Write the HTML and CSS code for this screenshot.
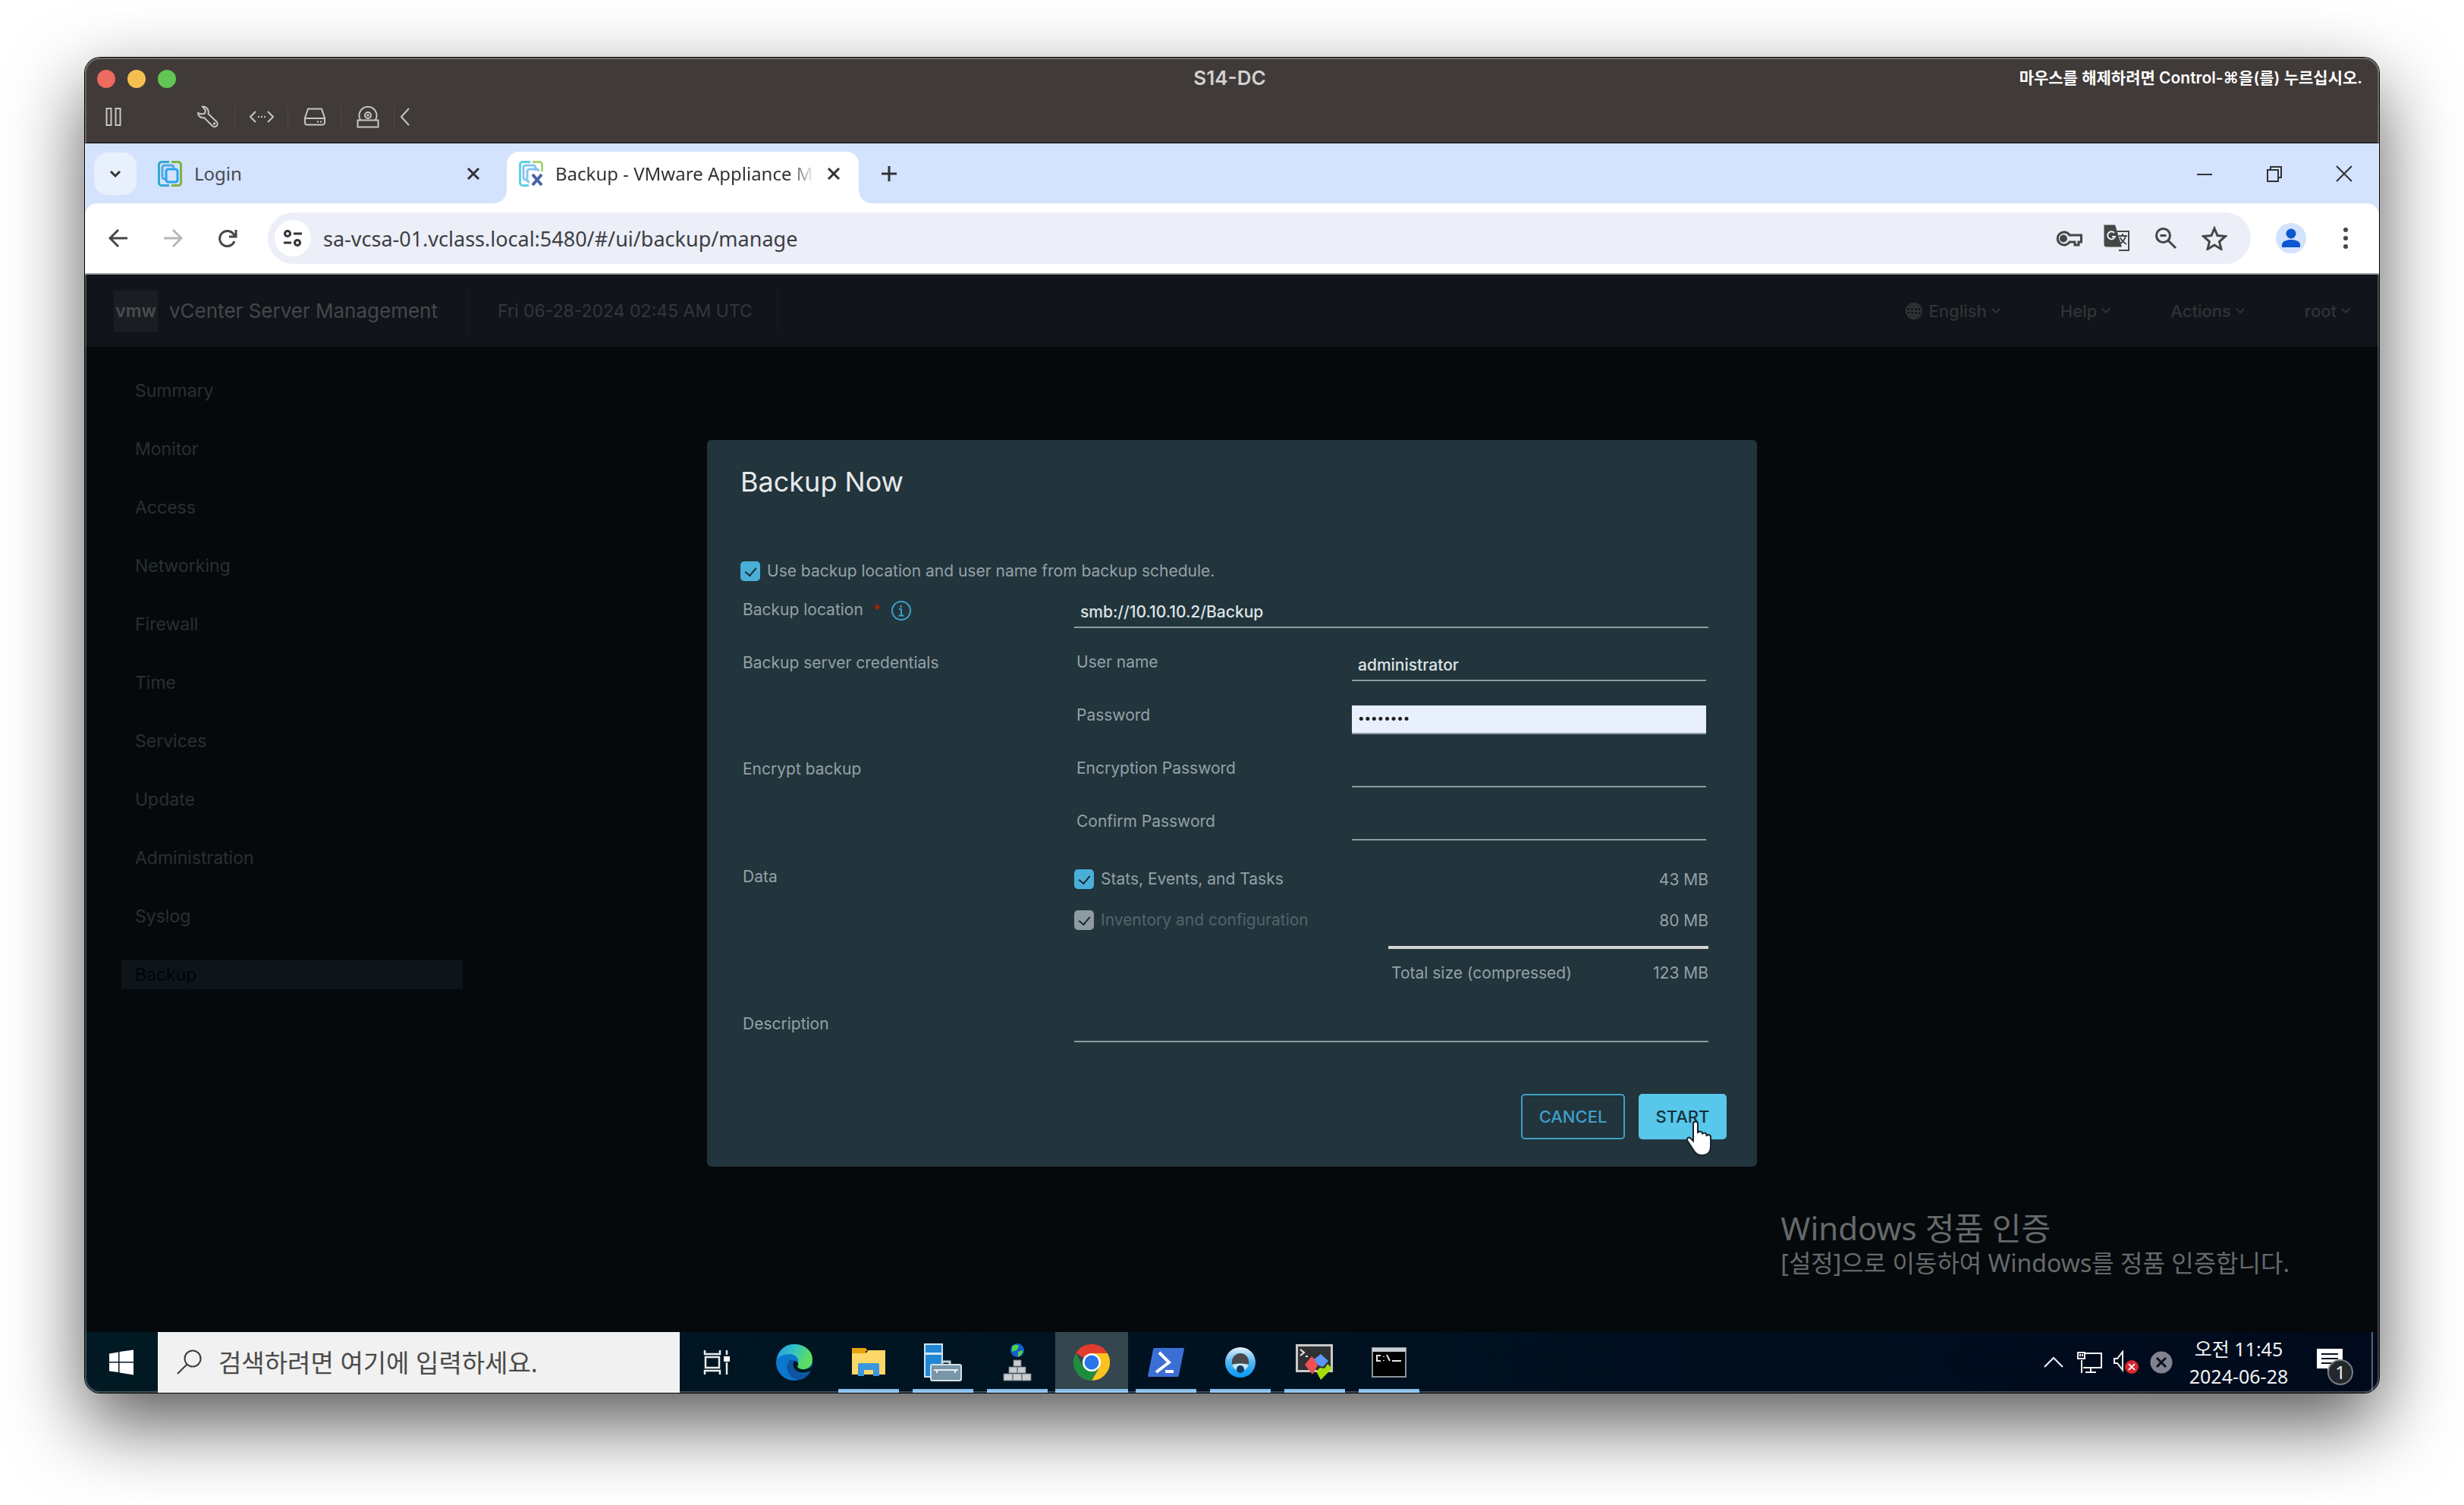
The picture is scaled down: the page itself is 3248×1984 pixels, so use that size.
FILE: index.html
```html
<!DOCTYPE html>
<html lang="ko">
<head>
<meta charset="utf-8">
<meta name="viewport" content="width=device-width, initial-scale=1">
<title>S14-DC</title>
<link rel="stylesheet" href="styles.css">
</head>
<body>
<div class="window">
  <header class="titlebar">
    <div class="title-row">
      <div class="lights">
        <button class="light light-red" aria-label="Close window"></button>
        <button class="light light-yellow" aria-label="Minimize window"></button>
        <button class="light light-green" aria-label="Zoom window"></button>
      </div>
      <h1 class="vm-name">S14-DC</h1>
      <p class="release-hint">마우스를 해제하려면 Control-⌘을(를) 누르십시오.</p>
    </div>
    <div class="vm-tools">
      <button class="vm-tool vm-pause" aria-label="Pause"><svg width="22" height="24" viewBox="0 0 22 24"><path d="M1.500 1h6v22h-6zM13.500 1h6v22h-6z"/></svg></button>
      <button class="vm-tool" aria-label="Settings"><svg width="30" height="30" viewBox="0 0 30 30"><path d="M2 10c0 4 4 7 8 6l11 11c1.500 1.500 4 1.500 5.500 0s1.500-4 0-5.500L15.500 11C17 6 13 1 8 1.500l4 5-1 4-4 1z"/><circle cx="23.500" cy="24" r="0.800"/></svg></button>
      <button class="vm-tool" aria-label="Network"><svg width="32" height="16" viewBox="0 0 32 16"><path d="M8 1 1 8l7 7M24 1l7 7-7 7M11 8h2M15 8h2M19 8h2"/></svg></button>
      <button class="vm-tool" aria-label="Hard disk"><svg width="30" height="24" viewBox="0 0 30 24"><path d="M6 1.500h18l4 12v6a3 3 0 0 1-3 3H5a3 3 0 0 1-3-3v-6zM2 14h26M18 18.500h2M22 18.500h2"/></svg></button>
      <button class="vm-tool" aria-label="CD drive"><svg width="30" height="30" viewBox="0 0 30 30"><path d="M1.500 19.500h27v9h-27zM5 19a11.500 11.500 0 1 1 20 0"/><circle cx="15" cy="13" r="4"/><circle cx="15" cy="13" r="0.800"/></svg></button>
      <button class="vm-tool vm-collapse" aria-label="Collapse"><svg width="14" height="24" viewBox="0 0 14 24"><path d="M12 1 2 12l10 11"/></svg></button>
    </div>
  </header>

  <div class="tab-strip">
    <button class="tab-search" aria-label="Search tabs"><svg width="18" height="12" viewBox="0 0 18 12"><path d="m3 3 6 6 6-6"/></svg></button>
    <div class="tab">
      <svg class="favicon" viewBox="0 0 32 34"><g fill="none" stroke-width="3"><path stroke="#35a9cf" d="M15 1.500H5A3.500 3.500 0 0 0 1.500 5v24A3.500 3.500 0 0 0 5 32.500h10"/><path stroke="#7cb342" d="M18 1.500h9A3.500 3.500 0 0 1 30.500 5v24a3.500 3.500 0 0 1-3.500 3.500h-9"/><rect x="6" y="6" width="15" height="18" rx="3" stroke="#4fa9e8"/><rect x="11" y="11" width="15" height="17" rx="3" stroke="#29a3f0" fill="#d3e2fd"/></g></svg>
      <span class="tab-title">Login</span>
      <button class="tab-close" aria-label="Close tab"><svg width="18" height="18" viewBox="0 0 18 18"><path d="m2 2 14 14M16 2 2 16"/></svg></button>
    </div>
    <div class="tab tab-active">
      <svg class="favicon" viewBox="0 0 32 34"><g fill="none" stroke-width="3"><path stroke="#5fcfe4" d="M15 1.500H5A3.500 3.500 0 0 0 1.500 5v24A3.500 3.500 0 0 0 5 32.500h8"/><path stroke="#a9d86e" d="M18 1.500h9A3.500 3.500 0 0 1 30.500 5v9"/><path stroke="#86c4f0" d="M12 25H9a3 3 0 0 1-3-3V9a3 3 0 0 1 3-3h10a3 3 0 0 1 3 3v4M14 28a3 3 0 0 1-3-3V14a3 3 0 0 1 3-3h9a3 3 0 0 1 3 3"/><path stroke="#4a63a6" stroke-width="4" d="m18 18 12 14M30 18 18 32"/></g></svg>
      <span class="tab-title">Backup - VMware Appliance M</span>
      <button class="tab-close" aria-label="Close tab"><svg width="18" height="18" viewBox="0 0 18 18"><path d="m2 2 14 14M16 2 2 16"/></svg></button>
    </div>
    <button class="new-tab" aria-label="New tab"><svg width="22" height="22" viewBox="0 0 22 22"><path d="M11 1v20M1 11h20"/></svg></button>
    <div class="win-controls">
      <button aria-label="Minimize"><svg width="22" height="22" viewBox="0 0 22 22"><path d="M1 12h20"/></svg></button>
      <button aria-label="Restore"><svg width="22" height="22" viewBox="0 0 22 22"><path d="M2 6h14v15H2zM6 6V2h14v14h-4"/></svg></button>
      <button aria-label="Close"><svg width="22" height="22" viewBox="0 0 22 22"><path d="m1 1 20 20M21 1 1 21"/></svg></button>
    </div>
  </div>

  <div class="nav-wrap">
    <div class="nav-bar">
      <button class="nav-btn" aria-label="Back"><svg width="26" height="26" viewBox="0 0 26 26"><path d="M25 13H3M13 2 2 13l11 11"/></svg></button>
      <button class="nav-btn nav-off" aria-label="Forward"><svg width="26" height="26" viewBox="0 0 26 26"><path d="M1 13h22M13 2l11 11-11 11"/></svg></button>
      <button class="nav-btn" aria-label="Reload"><svg width="26" height="26" viewBox="0 0 26 26"><path d="M22 17a10 10 0 1 1-1-9l3 3M24 2v9h-9"/></svg></button>
      <div class="url-pill">
        <button class="site-info" aria-label="Site information"><svg width="26" height="24" viewBox="0 0 26 24"><circle cx="6" cy="6" r="3.500"/><path d="M14 6h11M1 18h10"/><circle cx="19" cy="18" r="3.500"/></svg></button>
        <input class="url" type="text" aria-label="Address" value="sa-vcsa-01.vclass.local:5480/#/ui/backup/manage">
        <button class="pill-btn" aria-label="Passwords"><svg width="36" height="22" viewBox="0 0 36 22"><path d="M19 7h15.500v9H31v4h-5v-4h-7a8.500 8.500 0 1 1 0-9z"/><circle cx="11" cy="11.500" r="3.500" fill="#444746"/></svg></button>
        <button class="pill-btn" aria-label="Translate"><svg width="36" height="36" viewBox="0 0 36 36"><path d="M18 9h15v25H20" stroke-width="2"/><path d="M2 2h12l8 26H4a2 2 0 0 1-2-2z" fill="#444746"/><path stroke="#eceef8" stroke-width="2" d="M14 11a5 5 0 1 0 1 5h-4"/><path stroke-width="2" d="M20 15h11M25 12v3M29 15c-1 5-4 8-7 10M22 17c1 3 5 7 8 9"/></svg></button>
        <button class="pill-btn" aria-label="Zoom"><svg width="30" height="30" viewBox="0 0 30 30"><circle cx="11.500" cy="11.500" r="9"/><path d="m18 18 10 10M7.500 11.500h8"/></svg></button>
        <button class="pill-btn" aria-label="Bookmark"><svg width="34" height="32" viewBox="0 0 34 32"><path d="m17 3 4 9.500 10.500 1-8 7 2.500 10L17 25l-9 5.500 2.500-10-8-7 10.500-1z"/></svg></button>
      </div>
      <button class="avatar" aria-label="Profile"><svg width="40" height="40" viewBox="0 0 40 40"><circle cx="20" cy="14" r="6.500"/><path d="M8 32v-3c0-5 6-7 12-7s12 2 12 7v3z"/></svg></button>
      <button class="menu-dots" aria-label="Menu"><svg width="8" height="30" viewBox="0 0 8 30"><circle cx="4" cy="4" r="3"/><circle cx="4" cy="15" r="3"/><circle cx="4" cy="26" r="3"/></svg></button>
    </div>
  </div>

  <div class="page">
    <header class="app-header">
      <span class="vmw">vmw</span>
      <span class="app-name">vCenter Server Management</span>
      <span class="app-date">Fri 06-28-2024 02:45 AM UTC</span>
      <nav class="app-menus">
        <button><svg width="24" height="24" viewBox="0 0 24 24"><circle cx="12" cy="12" r="10"/><path d="M2 12h20M12 2v20M4 7h16M4 17h16M12 2C5 7 5 17 12 22M12 2c7 5 7 15 0 20"/></svg>English<svg class="caret" width="12" height="8" viewBox="0 0 12 8"><path d="m1 1 5 5 5-5"/></svg></button>
        <button>Help<svg class="caret" width="12" height="8" viewBox="0 0 12 8"><path d="m1 1 5 5 5-5"/></svg></button>
        <button>Actions<svg class="caret" width="12" height="8" viewBox="0 0 12 8"><path d="m1 1 5 5 5-5"/></svg></button>
        <button>root<svg class="caret" width="12" height="8" viewBox="0 0 12 8"><path d="m1 1 5 5 5-5"/></svg></button>
      </nav>
    </header>
    <nav class="side">
      <a href="#summary">Summary</a>
      <a href="#monitor">Monitor</a>
      <a href="#access">Access</a>
      <a href="#networking">Networking</a>
      <a href="#firewall">Firewall</a>
      <a href="#time">Time</a>
      <a href="#services">Services</a>
      <a href="#update">Update</a>
      <a href="#administration">Administration</a>
      <a href="#syslog">Syslog</a>
      <a class="current" href="#backup">Backup</a>
    </nav>

    <div class="overlay">
      <form class="dialog" aria-labelledby="dialog-title">
        <h2 class="dialog-title" id="dialog-title">Backup Now</h2>
        <div class="dialog-body">
          <label class="check schedule"><input type="checkbox" checked> Use backup location and user name from backup schedule.</label>
          <div class="row">
            <label class="name" for="location">Backup location <span class="req">•</span>
              <svg class="info" width="28" height="28" viewBox="0 0 28 28"><circle cx="14" cy="14" r="12"/><path d="M11 12h3v8M10.500 20.500h7M13.500 7v3"/></svg>
            </label>
            <div class="field"><input class="line-input" id="location" type="text" value="smb://10.10.10.2/Backup"></div>
          </div>
          <div class="row">
            <span class="name">Backup server credentials</span>
            <div class="pairs">
              <label for="user">User name</label><div class="field"><input class="line-input" id="user" type="text" value="administrator"></div>
              <label for="pass">Password</label><div class="field"><input class="line-input autofilled" id="pass" type="password" value="password"></div>
            </div>
          </div>
          <div class="row">
            <span class="name">Encrypt backup</span>
            <div class="pairs">
              <label for="enc">Encryption Password</label><div class="field"><input class="line-input" id="enc" type="password"></div>
              <label for="conf">Confirm Password</label><div class="field"><input class="line-input" id="conf" type="password"></div>
            </div>
          </div>
          <div class="row data-row">
            <span class="name">Data</span>
            <div class="data">
              <div class="data-item"><label class="check"><input type="checkbox" checked> Stats, Events, and Tasks</label><span>43 MB</span></div>
              <div class="data-item"><label class="check check-off"><input type="checkbox" checked disabled> Inventory and configuration</label><span>80 MB</span></div>
              <div class="total"><span>Total size (compressed)</span><span>123 MB</span></div>
            </div>
          </div>
          <div class="row">
            <label class="name" for="desc">Description</label>
            <div class="field"><input class="line-input" id="desc" type="text"></div>
          </div>
        </div>
        <div class="dialog-actions">
          <button class="btn btn-outline" type="button">CANCEL</button>
          <button class="btn btn-primary" type="button">START<svg class="pointer" width="36" height="48" viewBox="0 0 36 48"><path d="M10 27V4.500a3 3 0 0 1 6 0V17c0-3.500 6-3 6 .5v1c0-3 5.500-2.500 5.500 1v1.500c0-3 5.500-2.500 5.500 1V34c0 7-4 12-12 12-6 0-9-3-12-9l-6.500-10C.5 24 4 21 6.500 23.500z"/></svg></button>
        </div>
      </form>
    </div>

    <div class="watermark">
      <p class="wm-title">Windows 정품 인증</p>
      <p class="wm-text">[설정]으로 이동하여 Windows를 정품 인증합니다.</p>
    </div>
  </div>

  <footer class="taskbar">
    <button class="start" aria-label="Start"><svg width="34" height="34" viewBox="0 0 34 34"><path fill="#fff" d="M1 5.500 13 3.500v12.500H1zM14.500 3 33 .5V16H14.500zM1 17.500h12v12.500L1 28.500zM14.500 17.500H33V33.500l-18.500-3z"/></svg></button>
    <label class="search"><svg width="36" height="34" viewBox="0 0 36 34"><circle cx="22" cy="12" r="10.500"/><path d="M14.500 19.500 2 32"/></svg><input type="text" aria-label="Search" placeholder="검색하려면 여기에 입력하세요."></label>
    <div class="apps">
      <button class="app task-view" aria-label="Task view"><svg width="36" height="34" viewBox="0 0 36 34"><g fill="none" stroke="#e8eef0" stroke-width="2.500"><path d="M2 1v5h20V1M2 33v-5h20v5M3 10h18v14H3zM31 1v6M31 17v16"/></g><path fill="#fff" d="M27 9h8v7h-8z"/></svg></button>
      <button class="app" aria-label="Edge"><svg width="48" height="48" viewBox="0 0 48 48"><defs><linearGradient id="e1" x1="0" x2="1" y2=".3"><stop offset="0" stop-color="#1f9be0"/><stop offset=".5" stop-color="#35c1c8"/><stop offset="1" stop-color="#5fe05a"/></linearGradient></defs><circle cx="24" cy="24" r="24" fill="#0c77cf"/><path fill="url(#e1)" d="M1 20C3 8 12 0 24 0c14 0 24 9 24 20 0 8-6 13-13 13-5 0-8-2-7-4 4-6 0-16-10-16C10 13 4 16 1 20z"/><path fill="#0d559f" d="M17 22c-7 10 1 25 14 25 6-1 11-5 14-10-8 4-18 2-21-5-1-3-1-6 1-9-3-3-6-3-8-1z"/><path fill="#011923" d="M24 22c-3 4-1 11 4 14 6 3 13 2 17-1l3-3v-5c-3 5-9 7-14 6-4-1-6-3-5-5 1-3-2-6-5-6z"/><path fill="#5fdc60" d="M46 15c3 9 0 18-11 18-5 0-8-2-7-4 1-2 2-4 1-7z" opacity=".5"/></svg></button>
      <button class="app open" aria-label="File Explorer"><svg width="44" height="38" viewBox="0 0 44 38"><path fill="#e8a20c" d="M0 0h18l3 4h-3v5H0z"/><path fill="#fdd768" d="M0 7h18l4-4h22v32H0z"/><path fill="#3a96dd" d="M8 37V22a2 2 0 0 1 2-2h24a2 2 0 0 1 2 2v15h-8v-8H16v8z"/></svg></button>
      <button class="app open" aria-label="Server Manager"><svg width="50" height="50" viewBox="0 0 50 50"><path fill="#1f87d6" stroke="#cfe4f2" stroke-width="2" d="M1 1h23v12H1zM1 14h23v30H1z"/><path fill="none" stroke="#c5d3db" stroke-width="3" d="M24 28v-4h10v4"/><rect x="9" y="28" width="40" height="21" rx="2" fill="#7896a8" stroke="#d5e0e6" stroke-width="2"/><path stroke="#e8eff3" stroke-width="2" d="M13 35h32M17 35v4M41 35v4"/></svg></button>
      <button class="app open" aria-label="IP tool"><svg width="38" height="50" viewBox="0 0 38 50"><circle cx="19" cy="9" r="9" fill="#1560c8"/><path fill="#4bd24b" d="M12 4c4-3 8-3 9 0l-3 5-6 2zM20 11l6-2c1 4-3 8-6 9z"/><g fill="#c9cdd0" stroke="#6f777c"><path d="M14 22h10v8H14zM8 31h11v8H8zM19 31h11v8H19zM1 40h12v9H1zM13 40h12v9H13zM25 40h12v9H25z"/></g></svg></button>
      <button class="app open app-active" aria-label="Chrome"><svg width="48" height="48" viewBox="0 0 48 48"><path fill="#e33b2e" d="M3.200 12A24 24 0 0 1 44.800 12L24 12v12z"/><path fill="#fcc31e" d="M44.800 12A24 24 0 0 1 24 48L34.400 30 24 12z"/><path fill="#1e8e3e" d="M24 48A24 24 0 0 1 3.200 12L13.600 30l10.400 6 10.400-6z"/><circle cx="24" cy="24" r="12" fill="#fff"/><circle cx="24" cy="24" r="9.500" fill="#2a74ea"/></svg></button>
      <button class="app open" aria-label="PowerShell"><svg width="48" height="38" viewBox="0 0 48 38"><path fill="#3c6fd6" d="M9 0h38a1 1 0 0 1 1 1l-7 35a2 2 0 0 1-2 2H1a1 1 0 0 1-1-1L7 2a2 2 0 0 1 2-2z"/><path fill="none" stroke="#fff" stroke-width="4" d="m15 6 13 13-17 13M23 31h11"/></svg></button>
      <button class="app open" aria-label="Remote client"><svg width="40" height="40" viewBox="0 0 40 40"><defs><linearGradient id="r1" x2="0" y2="1"><stop offset="0" stop-color="#e8f3fb"/><stop offset=".5" stop-color="#4fb4f2"/><stop offset="1" stop-color="#0797f5"/></linearGradient></defs><circle cx="20" cy="20" r="20" fill="url(#r1)"/><path fill="#c4e4f8" d="M9 20h22c0 7-5 11-11 11S9 27 9 20z"/><path fill="#4a4a4c" d="M9 19a11 11 0 0 1 22 0v4c-7-2-15-2-22 0z"/><circle cx="20" cy="29" r="5" fill="#163d5c"/></svg></button>
      <button class="app open" aria-label="Terminal manager"><svg width="50" height="48" viewBox="0 0 50 48"><path fill="#2f3133" stroke="#c9c9c9" stroke-width="3" d="M1.500 1.500h46v34h-46z"/><path fill="none" stroke="#eee" stroke-width="2" d="m6 7 5 4-5 4M13 16h3"/><path fill="#f0504f" d="m12 27 9-11 6 6 2 6-7 12z"/><path fill="#5c97f5" d="m24 20 9-7 10 9-7 8-6-2z"/><path fill="#a4dc0c" d="m27 36 5-5 6 1 4-6 6 6-15 15z"/></svg></button>
      <button class="app open" aria-label="Command Prompt"><svg width="46" height="40" viewBox="0 0 46 40"><path stroke="#8d9499" stroke-width="2" d="M1 1h44v38H1z"/><path fill="#c9d0d6" d="M1 1h44v5H1z"/><path fill="none" stroke="#e8e8e8" stroke-width="2" d="M12 11H7v7h5M16 12v1M16 17v1M20 10l4 8M27 18h12"/></svg></button>
    </div>
    <div class="tray">
      <button class="tray-more" aria-label="Show hidden icons"><svg width="26" height="16" viewBox="0 0 26 16"><path d="m1 14 12-12 12 12"/></svg></button>
      <button aria-label="Network"><svg width="34" height="30" viewBox="0 0 34 30"><path d="M11 3h21v19H8M6 12v17M1 2h9v8H1zM4 4v3M7 4v3M18 22v6M11 28h14"/></svg></button>
      <button aria-label="Volume muted"><svg width="34" height="32" viewBox="0 0 34 32"><path d="M1 11h4l7-9v24l-7-9H1z"/><circle cx="24" cy="22" r="9" fill="#d9252c" stroke="none"/><path d="m20 18 8 8M28 18l-8 8"/></svg></button>
      <button aria-label="Status"><svg width="30" height="30" viewBox="0 0 30 30"><circle cx="15" cy="15" r="14.500" fill="#80838f" stroke="none"/><path stroke="#0a1020" stroke-width="3" d="m9 9 12 12M21 9 9 21"/></svg></button>
      <div class="clock"><time>오전 11:45</time><time>2024-06-28</time></div>
      <button class="notify" aria-label="Notifications"><svg width="34" height="36" viewBox="0 0 34 36"><path fill="#fff" stroke="none" d="M0 0h34v26H20l-6 8v-8H0z"/><path stroke="#0a1020" d="M6 7h22M6 13h22M6 19h14"/></svg><span class="badge">1</span></button>
      <span class="peek"></span>
    </div>
  </footer>
</div>
</body>
</html>
```

FILE: styles.css
```css
* { box-sizing: border-box; }

body {
  margin: 0;
  min-height: 100vh;
  padding: 76px 112px 148px;
  display: flex;
  background: #fff;
  font-family: "Noto Sans", "Noto Sans CJK KR", sans-serif;
}

button {
  margin: 0;
  padding: 0;
  border: 0;
  background: none;
  color: inherit;
  font: inherit;
  display: flex;
  align-items: center;
  justify-content: center;
}

input { font: inherit; margin: 0; }
p, h1, h2 { margin: 0; }
svg { display: block; flex: none; }

.window {
  position: relative;
  flex: 1;
  display: flex;
  flex-direction: column;
  border-radius: 20px;
  overflow: hidden;
  box-shadow: 0 0 0 1px #000, 0 40px 100px rgba(0, 0, 0, .66);
}

/* thin highlight drawn over the window edge */
.window::after {
  content: "";
  position: absolute;
  inset: 0;
  border: 2px solid rgba(255, 255, 255, .24);
  border-radius: 20px;
  pointer-events: none;
}

/* host title bar */
.titlebar {
  height: 113px;
  background: #403a39;
  border-bottom: 1px solid #000;
  font-family: Inter, "Noto Sans CJK KR", sans-serif;
}

.title-row {
  height: 56px;
  padding: 0 22px 0 16px;
  display: grid;
  grid-template-columns: 1fr auto 1fr;
  align-items: center;
}

.lights { display: flex; gap: 16px; }
.light { width: 24px; height: 24px; border-radius: 50%; }
.light-red { background: #ed6a5e; }
.light-yellow { background: #f5bf4f; }
.light-green { background: #61c554; }
.vm-name { line-height: 32px; padding-bottom: 2px; font-size: 26px; font-weight: 600; color: #d3d1d0; }
.release-hint { line-height: 32px; padding-bottom: 2px; text-align: right; font-size: 21px; font-weight: 600; color: #fff; }

.vm-tools { display: flex; align-items: center; height: 44px; padding-left: 27px; }
.vm-tool { width: 70px; height: 28px; border-left: 1px solid #4f4948; }
.vm-tool svg { fill: none; stroke: #c8c5c4; stroke-width: 2; }
.vm-pause { width: 22px; margin-right: 78px; border: 0; }
.vm-pause + .vm-tool { border: 0; }
.vm-collapse { width: 28px; }

/* browser tabs */
.tab-strip {
  height: 79px;
  padding-left: 12px;
  display: flex;
  align-items: center;
  background: #d3e2fd;
  color: #1f1f1f;
  font-size: 24px;
}

.tab-strip svg { fill: none; stroke: #303236; stroke-width: 3; }
.tab-strip .favicon { width: 32px; height: 34px; }
.tab-search { width: 56px; height: 56px; border-radius: 18px; background: #e9f0fd; }

.tab {
  position: relative;
  width: 488px;
  height: 68px;
  margin-top: 11px;
  padding: 0 35px 11px 28px;
  display: flex;
  align-items: center;
  gap: 16px;
  color: #474a50;
}

.tab-active {
  width: 464px;
  padding: 0 24px 11px 16px;
  border-radius: 16px 16px 0 0;
  background: #fff;
  color: #303236;
}

.tab-active::before,
.tab-active::after {
  content: "";
  position: absolute;
  bottom: 0;
  width: 16px;
  height: 16px;
}
.tab-active::before { left: -16px; background: radial-gradient(circle at 0 0, transparent 15px, #fff 16px); }
.tab-active::after { right: -16px; background: radial-gradient(circle at 100% 0, transparent 15px, #fff 16px); }

.tab-title { flex: 1; overflow: hidden; white-space: nowrap; }
.tab-active .tab-title {
  -webkit-mask-image: linear-gradient(90deg, #000 90%, transparent);
  mask-image: linear-gradient(90deg, #000 90%, transparent);
}
.tab-close { width: 18px; height: 18px; }
.new-tab { width: 56px; height: 56px; margin-left: 12px; }
.win-controls { margin-left: auto; display: flex; }
.win-controls button { width: 92px; height: 78px; }
.tab-strip .win-controls svg { stroke-width: 2; }

/* browser toolbar */
.nav-wrap { background: #d3e2fd; border-bottom: 2px solid #9b9ea1; }
.nav-bar {
  height: 92px;
  padding-left: 31px;
  border-radius: 16px 16px 0 0;
  display: flex;
  align-items: center;
  background: #fff;
}
.nav-btn { width: 26px; height: 26px; margin-right: 46px; }
.nav-btn svg { fill: none; stroke: #444746; stroke-width: 3; }
.nav-off svg { stroke: #b4b6b8; }

.url-pill {
  flex: 1;
  height: 68px;
  margin-left: -6px;
  padding: 0 16px 0 9px;
  display: flex;
  align-items: center;
  border-radius: 34px;
  background: #eceef8;
}
.site-info { width: 48px; height: 48px; border-radius: 50%; background: #fff; }
.site-info svg { fill: none; stroke: #303236; stroke-width: 3; }
.url {
  flex: 1;
  min-width: 0;
  padding: 0 16px;
  border: 0;
  background: none;
  color: #3c3e42;
  font-size: 27px;
}
.pill-btn { width: 64px; height: 48px; }
.pill-btn svg { fill: none; stroke: #444746; stroke-width: 3; }
.avatar { width: 40px; height: 40px; margin-left: 33px; border-radius: 50%; background: #d3e2fd; }
.avatar svg { fill: #0b57d0; }
.menu-dots { width: 8px; margin: 0 40px 0 48px; }
.menu-dots svg { fill: #444746; }

/* appliance page */
.page {
  position: relative;
  flex: 1;
  background: #05090c;
  color: #252b30;
  font-family: Inter, "Noto Sans CJK KR", sans-serif;
  font-size: 21px;
}

.app-header {
  height: 95px;
  padding: 0 38px;
  display: flex;
  align-items: center;
  background: #11141a;
  color: #35393b;
}
.vmw {
  width: 58px;
  height: 54px;
  line-height: 54px;
  text-align: center;
  background: #1a1d22;
  color: #4a4d4f;
  font-size: 23px;
  font-weight: 600;
}
.app-name { margin: 0 40px 0 15px; color: #44484a; font-size: 26px; }
.app-date { padding: 0 33px 0 38px; line-height: 64px; border: 1px solid #171a20; border-width: 0 1px; font-size: 23px; color: #33373a; }
.app-menus { margin-left: auto; display: flex; gap: 79px; }
.app-menus button { gap: 8px; font-size: 22px; font-weight: 500; color: #303435; }
.app-menus svg { fill: none; stroke: #303435; stroke-width: 2; }
.caret { margin-left: -2px; }

.side {
  width: 498px;
  padding: 39px 0 0 48px;
  display: flex;
  flex-direction: column;
  gap: 39px;
}
.side a {
  padding-left: 18px;
  line-height: 38px;
  font-size: 23px;
  color: #292f34;
  text-decoration: none;
}
.side .current { background: #0d151b; color: #020405; }

/* backup dialog */
.overlay {
  position: absolute;
  inset: 0;
  display: grid;
  place-items: center;
}
.dialog {
  width: 1384px;
  max-width: 100%;
  padding: 33px 40px 36px 44px;
  border-radius: 6px;
  background: #22343c;
  color: #94a1a7;
}
.dialog-title { line-height: 44px; font-size: 36px; font-weight: 400; color: #e6eaec; }
.dialog-body { padding: 82px 24px 0 0; }

.check { display: flex; align-items: center; gap: 9px; line-height: 28px; }
.check input {
  appearance: none;
  width: 26px;
  height: 26px;
  border-radius: 5px;
  background: #49afd9;
}
.check input::before {
  content: "";
  display: block;
  width: 7px;
  height: 12px;
  margin: 5px 0 0 9px;
  border: solid #1b2a32;
  border-width: 0 2px 2px 0;
  transform: rotate(40deg);
}
.check-off { color: #52646c; }
.check-off input { background: #8e9aa1; }

.row { display: grid; grid-template-columns: 440px 1fr; }
.name { display: flex; align-items: center; height: 72px; padding-left: 3px; }
.req { width: 8px; margin: 0 16px 8px 12px; font-size: 20px; line-height: 20px; color: #a32100; }
.info { margin-top: 4px; fill: none; stroke: #3f9fc9; stroke-width: 2; }

.field { display: flex; height: 70px; padding-top: 23px; }
.pairs { display: grid; grid-template-columns: 363px 1fr; line-height: 71px; padding: 0 3px; }
.line-input {
  width: 100%;
  height: 38px;
  padding: 0 8px 3px;
  border: 0;
  border-bottom: 2px solid #8e9ba1;
  outline: 0;
  background: none;
  color: #dde3e6;
  font-weight: 500;
}
.autofilled { background: #e8f0fe; color: #1b1b1b; font-size: 16px; }
.row { height: auto; }
.pairs .field { height: 70px; }
.pairs label { height: 70px; }
.row > .name { margin-bottom: -2px; }

.data-row { margin-top: 2px; }
.data { padding-top: 13px; }
.data-item { display: flex; align-items: center; justify-content: space-between; height: 54px; }
.total {
  display: flex;
  align-items: center;
  justify-content: space-between;
  height: 66px;
  margin: 7px 0 0 414px;
  padding-left: 4px;
  border-top: 4px solid #d4d4d0;
}

.dialog-actions { display: flex; justify-content: flex-end; gap: 18px; padding-top: 59px; }
.btn { position: relative; height: 60px; border: 2px solid #3f9fc9; border-radius: 5px; font-size: 22px; font-weight: 500; }
.btn-outline { width: 137px; color: #3f9fc9; }
.btn-primary { width: 116px; border-color: #57c7ea; background: #57c7ea; color: #14313c; }
.pointer { position: absolute; left: 60px; top: 33px; fill: #fff; stroke: #1c2230; stroke-width: 2; }

.watermark {
  position: absolute;
  right: 118px;
  bottom: 70px;
  color: #66696a;
  font-family: "Noto Sans", "Noto Sans CJK KR", sans-serif;
}
.wm-title { line-height: 50px; font-size: 42px; }
.wm-text { line-height: 42px; font-size: 32px; }

/* taskbar */
.taskbar {
  height: 80px;
  display: flex;
  background: linear-gradient(90deg, #011a23, #001020 60%, #000a1c);
}
.start { width: 96px; }
.search {
  width: 688px;
  padding-left: 24px;
  display: flex;
  align-items: center;
  gap: 20px;
  background: #f1f1f1;
}
.search svg { fill: none; stroke: #3c3c3c; stroke-width: 2; }
.search input { flex: 1; min-width: 0; padding: 0; border: 0; background: none; font-size: 33px; }
.search input::placeholder { color: #4a4a4a; opacity: 1; }

.apps { display: flex; }
.app { width: 98px; position: relative; }
.task-view { margin-right: 4px; }
.open::after {
  content: "";
  position: absolute;
  inset: auto 9px 0;
  height: 5px;
  background: #82bdee;
}
.app-active { background: linear-gradient(90deg, transparent 1px, #35464f 1px, #35464f 97px, transparent 97px); }
.app-active::after { inset: auto 1px 0; }

.tray { margin-left: auto; display: flex; align-items: center; color: #f0f2f4; }
.tray svg { fill: none; stroke: #f0f2f4; stroke-width: 2; }
.tray > button { margin-right: 14px; }
.tray > .tray-more { margin-right: 18px; }
.clock { width: 146px; display: flex; flex-direction: column; align-items: center; line-height: 36px; font-size: 25px; }
.tray .notify { position: relative; margin: 0 38px 0 30px; }
.badge {
  position: absolute;
  left: 14px;
  top: 14px;
  width: 34px;
  height: 34px;
  border: 2px solid #777b80;
  border-radius: 50%;
  background: #23282c;
  line-height: 30px;
  font-size: 24px;
}
.peek { width: 2px; height: 80px; margin-right: 8px; background: #5a6470; }
```
